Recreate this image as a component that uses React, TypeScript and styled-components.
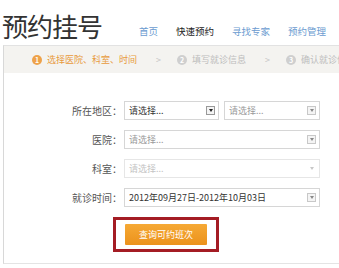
import React from "react";
import styled, { createGlobalStyle } from "styled-components";

const Global = createGlobalStyle`
  html, body { margin: 0; padding: 0; background: #fff; }
  body {
    width: 339px; height: 268px; overflow: hidden;
    font-family: "Noto Sans CJK SC", "Noto Sans", sans-serif;
  }
`;

const Header = styled.div`
  height: 45px;
  display: flex;
  align-items: flex-end;
  justify-content: space-between;
  padding-left: 2px;
  box-sizing: border-box;
`;

const Title = styled.h1`
  margin: 0 0 3px;
  font-size: 26px;
  font-weight: 400;
  line-height: 32px;
  color: #333;
  letter-spacing: -1px;
`;

const Nav = styled.nav`
  display: flex;
  gap: 18px;
  margin-right: 13px;
  margin-bottom: 8px;
`;

const NavItem = styled.span<{ $active?: boolean }>`
  font-size: 9.5px;
  line-height: 12px;
  color: ${(p) => (p.$active ? "#222" : "#6b9bd0")};
`;

const Panel = styled.div`
  margin-left: 3px;
  border-left: 1px solid #d8d8d8;
  border-top: 1px solid #e2e2e2;
  border-bottom: 1px solid #e4e4e4;
  height: 219px;
  box-sizing: border-box;
`;

const StepBar = styled.div`
  height: 27px;
  background: #f4f3f0;
  display: flex;
  align-items: center;
  padding-left: 28px;
  overflow: hidden;
`;

const Step = styled.div<{ $active?: boolean }>`
  display: flex;
  align-items: center;
  gap: 5px;
  font-size: 9px;
  color: ${(p) => (p.$active ? "#e89a3c" : "#bdbdbd")};
  white-space: nowrap;
`;

const StepNum = styled.span<{ $active?: boolean }>`
  width: 10px;
  height: 10px;
  border-radius: 50%;
  background: ${(p) => (p.$active ? "#eea24a" : "#cfcfcf")};
  color: #fff;
  font-size: 7px;
  font-weight: 700;
  display: flex;
  align-items: center;
  justify-content: center;
`;

const Chevron = styled.span`
  color: #c4c4c4;
  font-size: 9px;
  margin: 0 16px 0 19px;
`;

const Form = styled.div`
  padding-top: 28px;
  display: grid;
  grid-template-columns: 118px 196px;
  column-gap: 2px;
  row-gap: 10px;
  align-items: center;
`;

const Label = styled.label`
  text-align: right;
  font-size: 10px;
  color: #555;
  line-height: 19px;
`;

const Fields = styled.div`
  display: flex;
  gap: 5px;
`;

const Select = styled.div<{ $w?: number; $muted?: boolean; $dim?: boolean }>`
  box-sizing: border-box;
  width: ${(p) => (p.$w ? `${p.$w}px` : "100%")};
  height: 19px;
  border: 1px solid ${(p) => (p.$dim ? "#e6e6e6" : "#d6d6d6")};
  display: flex;
  align-items: center;
  justify-content: space-between;
  padding: 0 3px 0 4px;
  font-size: 9px;
  color: ${(p) => (p.$dim ? "#c4c4c4" : p.$muted ? "#9a9a9a" : "#333")};
  background: #fff;
`;

const ArrowBox = styled.span<{ $dark?: boolean; $plain?: boolean }>`
  width: 9px;
  height: 9px;
  box-sizing: border-box;
  border: 1px solid ${(p) => (p.$plain ? "transparent" : p.$dark ? "#999" : "#c8c8c8")};
  background: ${(p) => (p.$plain ? "transparent" : "#f4f4f4")};
  display: flex;
  align-items: center;
  justify-content: center;
  &::after {
    content: "";
    border-left: 2.5px solid transparent;
    border-right: 2.5px solid transparent;
    border-top: 3px solid ${(p) => (p.$dark ? "#222" : p.$plain ? "#c8c8c8" : "#888")};
  }
`;

const ButtonRow = styled.div`
  padding: 10px 0 0 109px;
`;

const Highlight = styled.div`
  width: 106px;
  height: 35px;
  box-sizing: border-box;
  border: 3px solid #a41c24;
  display: flex;
  align-items: center;
  justify-content: center;
  padding-right: 4px;
`;

const QueryButton = styled.button`
  width: 82px;
  height: 21px;
  border: none;
  border-radius: 1px;
  background: linear-gradient(#f6a935, #eb921c);
  color: #fff;
  font-family: inherit;
  font-size: 9px;
  padding: 0;
  margin-left: 4px;
`;

export default function App() {
  return (
    <>
      <Global />
      <Header>
        <Title>预约挂号</Title>
        <Nav>
          <NavItem>首页</NavItem>
          <NavItem $active>快速预约</NavItem>
          <NavItem>寻找专家</NavItem>
          <NavItem>预约管理</NavItem>
        </Nav>
      </Header>
      <Panel>
        <StepBar>
          <Step $active>
            <StepNum $active>1</StepNum>选择医院、科室、时间
          </Step>
          <Chevron>&gt;</Chevron>
          <Step>
            <StepNum>2</StepNum>填写就诊信息
          </Step>
          <Chevron>&gt;</Chevron>
          <Step>
            <StepNum>3</StepNum>确认就诊信息
          </Step>
        </StepBar>
        <Form>
          <Label>所在地区：</Label>
          <Fields>
            <Select $w={95}>
              请选择...
              <ArrowBox $dark />
            </Select>
            <Select $w={96} $muted>
              请选择...
              <ArrowBox />
            </Select>
          </Fields>
          <Label>医院：</Label>
          <Select $muted>
            请选择...
            <ArrowBox />
          </Select>
          <Label>科室：</Label>
          <Select $dim>
            请选择...
            <ArrowBox $plain />
          </Select>
          <Label>就诊时间：</Label>
          <Select>
            2012年09月27日-2012年10月03日
            <ArrowBox />
          </Select>
        </Form>
        <ButtonRow>
          <Highlight>
            <QueryButton>查询可约班次</QueryButton>
          </Highlight>
        </ButtonRow>
      </Panel>
    </>
  );
}
